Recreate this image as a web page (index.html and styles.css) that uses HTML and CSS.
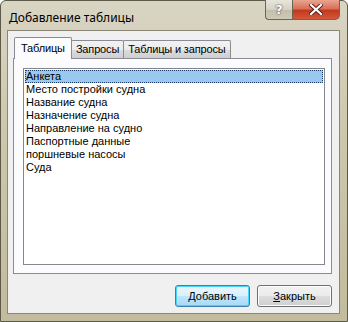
FILE: index.html
```html
<!DOCTYPE html>
<html lang="ru">
<head>
<meta charset="utf-8">
<title>Добавление таблицы</title>
<link rel="stylesheet" href="styles.css">
</head>
<body>
<div class="window">
  <div class="titlebar">
    <span class="title">Добавление таблицы</span>
    <div class="caption-buttons">
      <div class="cbtn help">?</div>
      <div class="cbtn close">
        <svg width="14" height="11" viewBox="0 0 14 11"><path d="M2 1 L12 10 M12 1 L2 10" stroke="#5a1a10" stroke-width="4" stroke-linecap="square"/><path d="M2 1 L12 10 M12 1 L2 10" stroke="#fff" stroke-width="2.2" stroke-linecap="square"/></svg>
      </div>
    </div>
  </div>
  <div class="client">
    <div class="tabs">
      <div class="tab active">Таблицы</div>
      <div class="tab">Запросы</div>
      <div class="tab">Таблицы и запросы</div>
    </div>
    <div class="panel">
      <div class="listbox">
        <div class="item selected">Анкета</div>
        <div class="item">Место постройки судна</div>
        <div class="item">Название судна</div>
        <div class="item">Назначение судна</div>
        <div class="item">Направление на судно</div>
        <div class="item">Паспортные данные</div>
        <div class="item">поршневые насосы</div>
        <div class="item">Суда</div>
      </div>
    </div>
    <div class="buttons">
      <div class="button default">Добавить</div>
      <div class="button"><u>З</u>акрыть</div>
    </div>
  </div>
</div>
</body>
</html>
```

FILE: styles.css
```css
* { box-sizing: border-box; }
html, body { margin: 0; padding: 0; }
body {
  width: 348px;
  height: 322px;
  background: #ffffff;
  font-family: "Liberation Sans", Arial, sans-serif;
  font-size: 11px;
  color: #000;
  overflow: hidden;
}
.window {
  width: 348px;
  height: 322px;
  background: linear-gradient(180deg, #d9d5c4 0%, #cdc7ad 40%, #c2bb9d 100%);
  border: 1px solid #5e5a48;
  border-radius: 6px 6px 0 0;
  display: flex;
  flex-direction: column;
  padding: 0 7px 7px 6px;
}
.titlebar {
  height: 29px;
  display: flex;
  align-items: flex-start;
  justify-content: space-between;
  flex: none;
}
.title {
  font-family: "Noto Sans", "Open Sans", sans-serif;
  font-size: 12px;
  margin: 8px 0 0 2px;
  color: #000;
}
.caption-buttons {
  display: flex;
  margin-top: -1px;
  margin-right: 0;
}
.cbtn {
  height: 20px;
  border: 1px solid #6b6657;
  border-top: none;
  display: flex;
  align-items: center;
  justify-content: center;
}
.help {
  width: 27px;
  border-radius: 0 0 0 4px;
  border-right: none;
  background: linear-gradient(180deg, #e8e6dc 0%, #d6d2c2 50%, #c3beab 51%, #cfcab6 100%);
  font-family: "DejaVu Sans", sans-serif;
  font-weight: bold;
  font-size: 13px;
  color: #fff;
  text-shadow: 0 0 2px #555, 0 0 1px #333;
}
.close {
  width: 48px;
  border-radius: 0 0 5px 0;
  background: linear-gradient(180deg, #e8a590 0%, #d9705a 45%, #c23a1e 55%, #d5573a 100%);
}
.client {
  flex: 1;
  background: #f0f0f0;
  border: 1px solid #8a8778;
  display: flex;
  flex-direction: column;
  padding: 6px 7px 6px 5px;
}
.tabs {
  display: flex;
  align-items: flex-end;
  height: 21px;
  padding-left: 3px;
  position: relative;
  z-index: 1;
}
.tab {
  height: 18px;
  border: 1px solid #898c95;
  border-bottom: none;
  margin-right: -1px;
  padding: 2px 4px 0;
  background: linear-gradient(180deg, #f2f2f2 0%, #ebebeb 50%, #dddddd 51%, #cfcfcf 100%);
  border-radius: 2px 2px 0 0;
  letter-spacing: -0.15px;
}
.tab.active {
  height: 22px;
  margin-left: -2px;
  margin-right: -1px;
  padding: 4px 6px 0;
  background: #fcfcfe;
  position: relative;
  z-index: 2;
  margin-bottom: -1px;
}
.panel {
  height: 216px;
  border: 1px solid #898c95;
  background: #fcfcfe;
  padding: 9px 6px 8px 9px;
}
.listbox {
  height: 100%;
  background: #fff;
  border: 1px solid #828790;
  padding: 1px;
}
.item {
  height: 13px;
  line-height: 13px;
  padding-left: 1px;
  white-space: nowrap;
}
.item.selected {
  background: #99c9ef;
  outline: 1px dotted #1f3b6a;
  outline-offset: -1px;
}
.buttons {
  display: flex;
  justify-content: flex-end;
  gap: 7px;
  margin-top: 11px;
  padding-right: 0;
}
.button {
  width: 75px;
  height: 22px;
  border: 1px solid #707070;
  border-radius: 3px;
  background: linear-gradient(180deg, #f2f2f2 0%, #ebebeb 50%, #dddddd 51%, #cfcfcf 100%);
  display: flex;
  align-items: center;
  justify-content: center;
  box-shadow: inset 0 0 0 1px #fcfcfc;
}
.button.default {
  border-color: #3c7fb1;
  background: linear-gradient(180deg, #eaf6fd 0%, #d9f0fc 50%, #bee6fd 51%, #a7d9f5 100%);
  box-shadow: inset 0 0 0 1px #48d4fb;
}
u { text-decoration: underline; }
```
